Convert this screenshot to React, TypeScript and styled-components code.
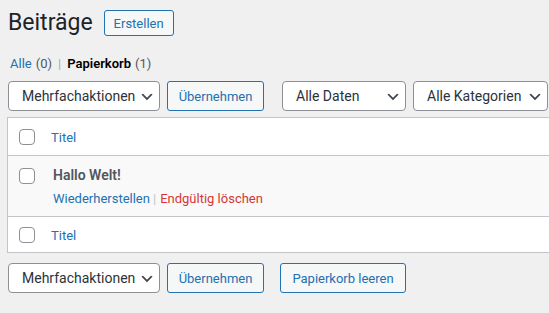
import React from "react";
import styled, { createGlobalStyle } from "styled-components";

const Global = createGlobalStyle`
  html, body { margin: 0; padding: 0; }
  body {
    background: #f0f0f1;
    font-family: Roboto, "Noto Sans", sans-serif;
    color: #3c434a;
    overflow: hidden;
  }
`;

const Wrap = styled.div`
  width: 549px;
  height: 313px;
  padding: 10px 0 0 7px;
  box-sizing: border-box;
  overflow: hidden;
`;

const Header = styled.div`
  display: flex;
  align-items: center;
  gap: 11px;
  height: 26px;
`;

const Title = styled.h1`
  margin: 0 0 0 1px;
  font-size: 23px;
  font-weight: 400;
  line-height: 26px;
  color: #1d2327;
`;

const OutlineButton = styled.button<{ $w: number; $h: number }>`
  box-sizing: border-box;
  width: ${(p) => p.$w}px;
  height: ${(p) => p.$h}px;
  padding: 0;
  border: 1px solid #2271b1;
  border-radius: 3px;
  background: #f6f7f7;
  color: #2271b1;
  font-family: inherit;
  font-size: 13px;
  line-height: 1;
  cursor: pointer;
`;

const Views = styled.ul`
  list-style: none;
  display: flex;
  align-items: center;
  margin: 17px 0 0 3px;
  padding: 0;
  height: 20px;
  font-size: 13px;
`;

const ViewItem = styled.li`
  display: flex;
  align-items: center;
`;

const ViewLink = styled.a<{ $current?: boolean }>`
  color: ${(p) => (p.$current ? "#000" : "#2271b1")};
  font-weight: ${(p) => (p.$current ? 600 : 400)};
  text-decoration: none;
`;

const Count = styled.span`
  color: #50575e;
  font-weight: 400;
  margin-left: 4px;
`;

const Sep = styled.span`
  color: #a7aaad;
  margin: 0 6px;
`;

const Toolbar = styled.div<{ $top: number }>`
  display: flex;
  align-items: center;
  margin-top: ${(p) => p.$top}px;
  height: 30px;
`;

const SelectBox = styled.div<{ $w: number; $ml: number }>`
  position: relative;
  width: ${(p) => p.$w}px;
  height: 30px;
  margin-left: ${(p) => p.$ml}px;
`;

const Select = styled.select`
  appearance: none;
  -webkit-appearance: none;
  box-sizing: border-box;
  width: 100%;
  height: 30px;
  margin: 0;
  padding: 0 24px 0 13px;
  border: 1px solid #8c8f94;
  border-radius: 4px;
  background: #fff;
  color: #2c3338;
  font-family: inherit;
  font-size: 14px;
  line-height: 28px;
`;

const Chevron = styled.svg`
  position: absolute;
  right: 5px;
  top: 8px;
  width: 16px;
  height: 16px;
  pointer-events: none;
`;

const Spacer = styled.div<{ $w: number }>`
  width: ${(p) => p.$w}px;
  flex: none;
`;

const Table = styled.div`
  margin-top: 6px;
  width: 560px;
  background: #fff;
  border: 1px solid #c3c4c7;
  border-right: none;
  box-sizing: border-box;
`;

const Row = styled.div<{ $h: number; $alt?: boolean; $top?: boolean }>`
  display: flex;
  align-items: ${(p) => (p.$top ? "flex-start" : "center")};
  height: ${(p) => p.$h}px;
  padding-top: ${(p) => (p.$top ? 0 : 2)}px;
  box-sizing: border-box;
  background: ${(p) => (p.$alt ? "#f9f9f9" : "#fff")};
  & + & {
    border-top: 1px solid #c3c4c7;
  }
`;

const CheckCell = styled.div<{ $top?: boolean }>`
  width: 43px;
  padding-left: 11px;
  padding-top: ${(p) => (p.$top ? 14 : 0)}px;
  box-sizing: border-box;
  display: flex;
  flex: none;
`;

const Checkbox = styled.span`
  box-sizing: border-box;
  width: 16px;
  height: 16px;
  margin-top: -2px;
  border: 1px solid #8c8f94;
  border-radius: 4px;
  background: #fff;
`;

const HeadLink = styled.a`
  color: #2271b1;
  font-size: 13px;
  text-decoration: none;
`;

const TitleCell = styled.div`
  display: flex;
  flex-direction: column;
  padding-top: 9px;
  padding-left: 2px;
`;

const PostTitle = styled.strong`
  color: #50575e;
  font-size: 14px;
  font-weight: 600;
  line-height: 20px;
`;

const Actions = styled.div`
  display: flex;
  align-items: center;
  margin-top: 4px;
  font-size: 13px;
  line-height: 20px;
`;

const ActionLink = styled.a<{ $danger?: boolean }>`
  color: ${(p) => (p.$danger ? "#d63638" : "#2271b1")};
  text-decoration: none;
`;

const ActionSep = styled.span`
  color: #c3c4c7;
  margin: 0 4px 0 3px;
`;

const ChevronIcon = () => (
  <Chevron viewBox="0 0 20 20">
    <path d="M5 6l5 5 5-5 2 1-7 7-7-7 2-1z" fill="#3c434a" />
  </Chevron>
);

const FakeSelect = ({ w, ml, label }: { w: number; ml: number; label: string }) => (
  <SelectBox $w={w} $ml={ml}>
    <Select defaultValue={label}>
      <option>{label}</option>
    </Select>
    <ChevronIcon />
  </SelectBox>
);

export default function App() {
  return (
    <>
      <Global />
      <Wrap>
        <Header>
          <Title>Beiträge</Title>
          <OutlineButton $w={70} $h={26}>Erstellen</OutlineButton>
        </Header>
        <Views>
          <ViewItem>
            <ViewLink href="#">Alle</ViewLink>
            <Count>(0)</Count>
          </ViewItem>
          <Sep>|</Sep>
          <ViewItem>
            <ViewLink href="#" $current>Papierkorb</ViewLink>
            <Count>(1)</Count>
          </ViewItem>
        </Views>
        <Toolbar $top={8}>
          <FakeSelect w={152} ml={1} label="Mehrfachaktionen" />
          <Spacer $w={7} />
          <OutlineButton $w={97} $h={30}>Übernehmen</OutlineButton>
          <FakeSelect w={124} ml={18} label="Alle Daten" />
          <FakeSelect w={135} ml={7} label="Alle Kategorien" />
        </Toolbar>
        <Table>
          <Row $h={37}>
            <CheckCell><Checkbox /></CheckCell>
            <HeadLink href="#">Titel</HeadLink>
          </Row>
          <Row $h={61} $alt $top>
            <CheckCell $top><Checkbox /></CheckCell>
            <TitleCell>
              <PostTitle>Hallo Welt!</PostTitle>
              <Actions>
                <ActionLink href="#">Wiederherstellen</ActionLink>
                <ActionSep>|</ActionSep>
                <ActionLink href="#" $danger>Endgültig löschen</ActionLink>
              </Actions>
            </TitleCell>
          </Row>
          <Row $h={36}>
            <CheckCell><Checkbox /></CheckCell>
            <HeadLink href="#">Titel</HeadLink>
          </Row>
        </Table>
        <Toolbar $top={10}>
          <FakeSelect w={152} ml={1} label="Mehrfachaktionen" />
          <Spacer $w={7} />
          <OutlineButton $w={97} $h={30}>Übernehmen</OutlineButton>
          <Spacer $w={16} />
          <OutlineButton $w={126} $h={30}>Papierkorb leeren</OutlineButton>
        </Toolbar>
      </Wrap>
    </>
  );
}
